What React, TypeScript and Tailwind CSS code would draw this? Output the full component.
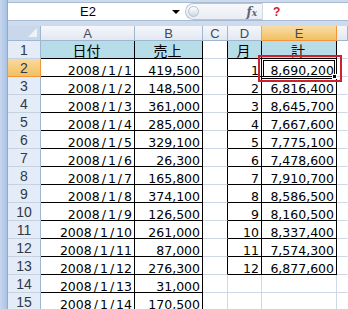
const dates = Array.from({ length: 14 }, (_, i) => `2008/1/${i + 1}`);
const sales = [
  "419,500", "148,500", "361,000", "285,000", "329,100", "26,300", "165,800",
  "374,100", "126,500", "261,000", "87,000", "276,300", "31,000", "170,500",
];
const totals = [
  "8,690,200", "6,816,400", "8,645,700", "7,667,600", "7,775,100", "7,478,600",
  "7,910,700", "8,586,500", "8,160,500", "8,337,400", "7,574,300", "6,877,600",
];
const letters = ["A", "B", "C", "D", "E", ""];
const rows = Array.from({ length: 15 }, (_, i) => i + 1);

// cells inside a black-bordered table
function inTable(r: number, c: number) {
  if ((c === 1 || c === 2) && r >= 1) return true;
  if ((c === 4 || c === 5) && r >= 1 && r <= 13) return true;
  return false;
}

// dates get a wider slash, like the sheet's font
function DateText({ value }: { value: string }) {
  const parts = value.split("/");
  return (
    <>
      {parts.map((p, i) => (
        <span key={i}>
          {i > 0 && <span className="px-[2px]">/</span>}
          {p}
        </span>
      ))}
    </>
  );
}

function cellValue(r: number, c: number) {
  if (r === 1) return ["", "日付", "売上", "", "月", "計", ""][c];
  if (c === 1) return dates[r - 2] ? <DateText value={dates[r - 2]} /> : "";
  if (c === 2) return sales[r - 2] ?? "";
  if (c === 4 && r <= 13) return String(r - 1);
  if (c === 5 && r <= 13) return totals[r - 2];
  return "";
}

function Cell({ r, c }: { r: number; c: number }) {
  const right =
    c === 6 ? "border-r-transparent" : inTable(r, c) || inTable(r, c + 1) ? "border-r-black" : "border-r-[#d0d7e5]";
  const bottom = inTable(r, c) || inTable(r + 1, c) ? "border-b-black" : "border-b-[#d0d7e5]";
  const head = r === 1 && c !== 3 && c !== 6;
  return (
    <div
      className={`border-r border-b ${right} ${bottom} ${
        head ? "bg-[#b7dee8] justify-center text-[14px] leading-[13px]" : "justify-end text-[12.5px] leading-[11px]"
      } flex items-end pr-[2px] overflow-hidden whitespace-nowrap text-black`}
    >
      {cellValue(r, c)}
    </div>
  );
}

export default function App() {
  return (
    <div className="relative w-[348px] h-[309px] overflow-hidden bg-white flex font-['DejaVu_Sans','Noto_Sans_CJK_JP',sans-serif]">
      {/* left window edge */}
      <div className="w-[8px] shrink-0 bg-gradient-to-r from-[#c6d7ee] to-[#a9c2e4] border-r border-[#8ea9d2]" />

      <div className="flex-1 min-w-0 flex flex-col">
        {/* formula bar */}
        <div className="h-[26px] shrink-0 bg-[#cedbed] pt-[2px]">
          <div className="h-[19px] bg-white border-y border-[#a9bbd4] flex items-center">
            <div className="w-[160px] text-center text-[13px] leading-none text-black font-['Liberation_Sans',sans-serif]">E2</div>
            <div className="w-[15px] flex justify-center">
              <div className="w-0 h-0 border-x-[4px] border-x-transparent border-t-[4px] border-t-black" />
            </div>
            <div className="w-[79px] h-full flex items-center pl-[2px]">
              <div className="h-[17px] flex-1 flex items-center rounded-l-full border-l border-y border-[#b7c4d6] bg-gradient-to-b from-[#f7f8fa] to-[#e9edf3] pl-[2px]">
                <div className="w-[11px] h-[11px] rounded-full border border-[#b3bfd0] bg-gradient-to-b from-white to-[#cfd8e4]" />
                <div className="flex-1" />
                <span className="font-['DejaVu_Serif',serif] italic font-bold text-[12px] text-[#5a6678] pr-[5px] leading-none">
                  f<span className="text-[9px]">x</span>
                </span>
              </div>
            </div>
            <div className="h-full border-l border-[#d3dbe6] pl-[10px] flex items-center text-[#d0202e] font-bold text-[12px] font-['Liberation_Sans',sans-serif]">
              ?
            </div>
          </div>
        </div>

        {/* column headers */}
        <div className="h-[15px] shrink-0 grid grid-cols-[33px_94px_68px_25px_34px_75px_1fr] text-[13px] leading-none text-[#3f4b5b] font-['Liberation_Sans',sans-serif]">
          <div className="relative bg-[#c9d7ea] border-r border-b border-[#9eb6ce]">
            <div className="absolute right-[3px] bottom-[3px] w-0 h-0 border-l-[9px] border-l-transparent border-b-[9px] border-b-[#eef3f9]" />
          </div>
          {letters.map((l, i) => (
            <div
              key={i}
              className={`flex items-center justify-center border-b ${
                l === "E"
                  ? "bg-gradient-to-b from-[#f9dca5] to-[#f1c15f] border-r border-[#f29536] border-b-[#f29536]"
                  : "bg-gradient-to-b from-[#f5f7fb] to-[#e2e8f1] border-r border-[#9eb6ce]"
              }`}
            >
              {l}
            </div>
          ))}
        </div>

        {/* sheet */}
        <div className="grid grid-cols-[33px_94px_68px_25px_34px_75px_1fr] auto-rows-[18px]">
          {rows.map((r) => (
            <div key={r} className="contents">
              <div
                className={`flex items-center justify-center border-r border-b text-[14px] leading-none font-['Liberation_Sans',sans-serif] text-[#303a47] ${
                  r === 2
                    ? "bg-gradient-to-b from-[#f9d99f] to-[#f1c15f] border-r-[#f29536] border-b-[#f29536]"
                    : "bg-[#e4ecf7] border-r-[#9eb6ce] border-b-[#c5d2e3]"
                }`}
              >
                {r}
              </div>
              {[1, 2, 3, 4, 5, 6].map((c) => (
                <Cell key={c} r={r} c={c} />
              ))}
            </div>
          ))}
        </div>
      </div>

      {/* active cell E2 */}
      <div className="absolute left-[261px] top-[58px] w-[76px] h-[21px] border-[3px] border-double border-black">
        <div className="absolute -right-[3px] -bottom-[3px] w-[5px] h-[5px] bg-black border border-white" />
      </div>
      {/* red highlight */}
      <div className="absolute left-[258px] top-[55px] w-[84px] h-[27px] border-[2px] border-[#d0202e]" />
    </div>
  );
}
